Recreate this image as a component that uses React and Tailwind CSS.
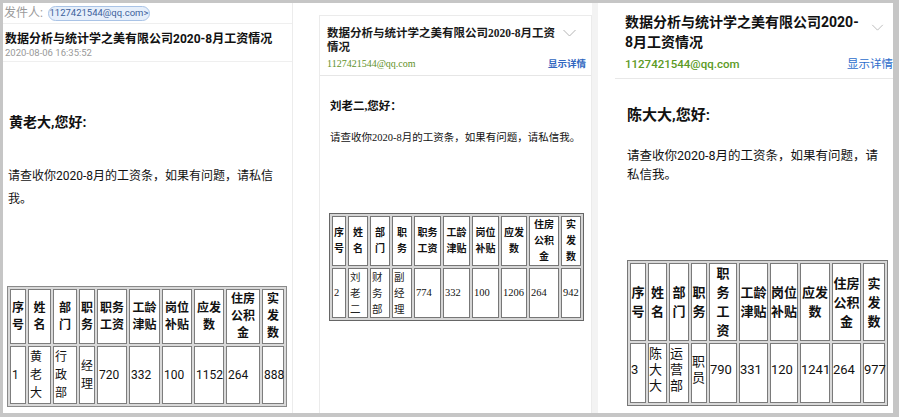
import React from "react";

const H_STD = [
  ["序", "号"],
  ["姓", "名"],
  ["部", "门"],
  ["职", "务"],
  ["职务", "工资"],
  ["工龄", "津贴"],
  ["岗位", "补贴"],
  ["应发", "数"],
  ["住房", "公积", "金"],
  ["实", "发", "数"],
];

const H_3 = [
  ["序", "号"],
  ["姓", "名"],
  ["部", "门"],
  ["职", "务"],
  ["职", "务", "工", "资"],
  ["工龄", "津贴"],
  ["岗位", "补贴"],
  ["应发", "数"],
  ["住房", "公积", "金"],
  ["实", "发", "数"],
];

const D_1 = [["1"], ["黄", "老", "大"], ["行", "政", "部"], ["经", "理"], ["720"], ["332"], ["100"], ["1152"], ["264"], ["888"]];
const D_2 = [["2"], ["刘", "老", "二"], ["财", "务", "部"], ["副", "经", "理"], ["774"], ["332"], ["100"], ["1206"], ["264"], ["942"]];
const D_3 = [["3"], ["陈", "大", "大"], ["运", "营", "部"], ["职", "员"], ["790"], ["331"], ["120"], ["1241"], ["264"], ["977"]];

const W_1 = ["w-[16px]", "w-[23px]", "w-[24px]", "w-[16px]", "w-[30px]", "w-[31px]", "w-[30px]", "w-[30px]", "w-[34px]", "w-[22px]"];
const W_2 = ["w-[14px]", "w-[20px]", "w-[20px]", "w-[20px]", "w-[27px]", "w-[27px]", "w-[27px]", "w-[26px]", "w-[30px]", "w-[20px]"];
const W_3 = ["w-[16px]", "w-[19px]", "w-[20px]", "w-[16px]", "w-[28px]", "w-[29px]", "w-[28px]", "w-[30px]", "w-[29px]", "w-[22px]"];

function SalaryTable({ tableClass, widths, headers, data, cellClass, headClass, dataClass, cjkClass = "" }) {
  return (
    <table className={tableClass}>
      <tbody>
        <tr>
          {headers.map((lines, i) => (
            <td key={i} className={`${cellClass} ${widths[i]} ${headClass}`}>
              {lines.map((l, j) => (
                <div key={j} className="whitespace-nowrap">
                  {l}
                </div>
              ))}
            </td>
          ))}
        </tr>
        <tr>
          {data.map((lines, i) => (
            <td key={i} className={`${cellClass} ${dataClass}`}>
              {lines.map((l, j) => (
                <div key={j} className={`whitespace-nowrap ${/^\d+$/.test(l) ? "" : cjkClass}`}>
                  {l}
                </div>
              ))}
            </td>
          ))}
        </tr>
      </tbody>
    </table>
  );
}

function Chevron({ className }) {
  return (
    <svg viewBox="0 0 14 8" className={className}>
      <polyline points="1,1 7,7 13,1" fill="none" stroke="#b5b5b5" strokeWidth="1" />
    </svg>
  );
}

function PanelOne() {
  return (
    <div className="w-[290px] h-full shrink-0 border-r border-[#ececec] flex flex-col font-['Roboto','Noto_Sans_CJK_SC',sans-serif] text-[#111]">
      <div className="h-[20px] flex items-center pl-[1px]">
        <span className="text-[12px] leading-[14px] text-[#9a9a9a]">发件人:</span>
        <span className="ml-[5px] h-[15px] w-[102px] rounded-full border border-[#a9c3e6] bg-[#e6effb] flex items-center justify-center text-[9.5px] leading-none text-[#3d5f9c] whitespace-nowrap">
          1127421544@qq.com&gt;
        </span>
      </div>
      <div className="h-[39px] border-y border-[#efefef] pl-[2px]">
        <div className="mt-[8px] text-[12px] leading-[14px] font-bold text-[#111] whitespace-nowrap">
          数据分析与统计学之美有限公司2020-8月工资情况
        </div>
        <div className="mt-[1px] text-[9.5px] leading-[12px] text-[#999]">2020-08-06 16:35:52</div>
      </div>
      <div className="mt-[50px] pl-[6px] text-[14px] leading-[21px] font-bold">黄老大,您好:</div>
      <div className="mt-[32px] ml-[5px] w-[270px] text-[12px] leading-[23px]">
        请查收你2020-8月的工资条，如果有问题，请私信我。
      </div>
      <div className="mt-auto mb-[6px] ml-[4px]">
        <SalaryTable
          tableClass="table-fixed w-[280px] border-separate border-spacing-[2px] border border-[#8a8a8a] bg-[#d9d9d9]"
          widths={W_1}
          headers={H_STD}
          data={D_1}
          cellClass="border border-[#7d7d7d] bg-white p-[1px] align-middle"
          headClass="text-center font-bold text-[12px] leading-[17px]"
          dataClass="text-left text-[12px] leading-[18px]"
        />
      </div>
    </div>
  );
}

function PanelTwo() {
  return (
    <div className="w-[305px] h-full shrink-0 flex font-['Liberation_Serif','Noto_Sans_CJK_SC',sans-serif] text-[#111]">
      <div className="w-[26px] shrink-0" />
      <div className="w-[273px] shrink-0 h-full pt-[12px]">
        <div className="h-full border-x border-t border-[#ebebeb] flex flex-col">
          <div className="h-[60px] border-b border-[#e6e6e6]">
            <div className="flex justify-between items-start pt-[10px] pl-[7px] pr-[14px]">
              <div className="text-[11.5px] leading-[14px] font-bold text-[#1a1a1a]">
                <div className="whitespace-nowrap">数据分析与统计学之美有限公司2020-8月工资</div>
                <div>情况</div>
              </div>
              <Chevron className="mt-[3px] w-[15px] h-[8px]" />
            </div>
            <div className="mt-[4px] h-[12px] flex justify-between items-center pl-[7px] pr-[5px]">
              <span className="text-[10px] leading-[12px] text-[#5f9128]">1127421544@qq.com</span>
              <span className="text-[9.5px] leading-[12px] text-[#3066bf] font-bold">显示详情</span>
            </div>
          </div>
          <div className="mt-[22px] pl-[10px] text-[11.5px] leading-[16px] font-bold">刘老二,您好：</div>
          <div className="mt-[17px] pl-[10px] text-[10.5px] leading-[14px] whitespace-nowrap">
            请查收你2020-8月的工资条，如果有问题，请私信我。
          </div>
          <div className="mt-[68px] ml-[9px]">
            <SalaryTable
              tableClass="table-fixed w-[255px] border-separate border-spacing-[2px] border border-[#666] bg-[#d6d6d6]"
              widths={W_2}
              headers={H_STD}
              data={D_2}
              cellClass="border border-[#777] bg-white px-[1px] py-0 align-middle text-[#111]"
              headClass="text-center font-bold text-[10px] leading-[16px]"
              dataClass="text-left text-[10.5px] leading-[16px]"
              cjkClass="font-['Noto_Sans_CJK_SC',sans-serif] text-[#222]"
            />
          </div>
        </div>
      </div>
      <div className="w-[6px] shrink-0 h-full bg-[#f3f3f3]" />
    </div>
  );
}

function PanelThree() {
  return (
    <div className="w-[295px] h-full shrink-0 flex flex-col font-['Roboto','Noto_Sans_CJK_SC',sans-serif] text-[#111]">
      <div className="h-[76px] ml-[17px] border-b border-[#e8e8e8]">
        <div className="flex justify-between items-start pt-[10px] pl-[10px] pr-[9px]">
          <div className="text-[14px] leading-[19.5px] font-bold">
            <div className="whitespace-nowrap">数据分析与统计学之美有限公司2020-</div>
            <div>8月工资情况</div>
          </div>
          <Chevron className="mt-[11px] w-[13px] h-[7px]" />
        </div>
        <div className="mt-[5px] h-[14px] flex justify-between items-center pl-[10px]">
          <span className="text-[11.5px] leading-[14px] text-[#5c9a25] font-medium">1127421544@qq.com</span>
          <span className="text-[11.5px] leading-[14px] text-[#2d6dcc]">显示详情</span>
        </div>
      </div>
      <div className="mt-[26px] pl-[29px] text-[15px] leading-[20px] font-bold">陈大大,您好:</div>
      <div className="mt-[21px] ml-[29px] w-[256px] text-[12.5px] leading-[19px]">
        请查收你2020-8月的工资条，如果有问题，请私信我。
      </div>
      <div className="mt-[76px] ml-[29px]">
        <SalaryTable
          tableClass="table-fixed w-[261px] border-separate border-spacing-[2px] border border-[#777] bg-[#d9d9d9]"
          widths={W_3}
          headers={H_3}
          data={D_3}
          cellClass="border border-[#7a7a7a] bg-white px-0 align-middle"
          headClass="text-center font-bold text-[13px] leading-[19px] py-0"
          dataClass="text-left text-[13px] leading-[16px] pt-[2px] pb-[8px]"
        />
      </div>
    </div>
  );
}

export default function App() {
  return (
    <div className="w-[899px] h-[417px] bg-[#c6c6c6] pt-[3px] pb-[4px] pl-[3px] pr-[6px] overflow-hidden">
      <div className="flex h-full bg-white overflow-hidden">
        <PanelOne />
        <PanelTwo />
        <PanelThree />
      </div>
    </div>
  );
}
